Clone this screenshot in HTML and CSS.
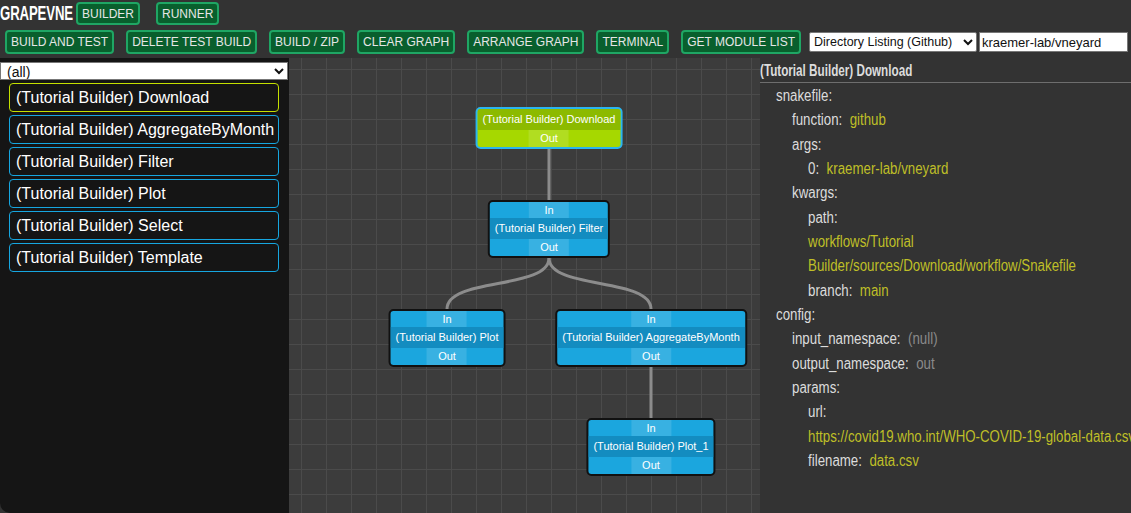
FILE: index.html
```html
<!DOCTYPE html>
<html>
<head>
<meta charset="utf-8">
<link rel="stylesheet" href="styles.css">
</head>
<body>
<div class="app">
  <header class="header">
    <div class="row row1">
      <span class="logo"><span class="logo-text">GRAPEVNE</span></span>
      <button class="btn btn-builder">BUILDER</button>
      <button class="btn btn-runner">RUNNER</button>
    </div>
    <div class="row row2">
      <button class="btn">BUILD AND TEST</button>
      <button class="btn">DELETE TEST BUILD</button>
      <button class="btn">BUILD / ZIP</button>
      <button class="btn">CLEAR GRAPH</button>
      <button class="btn">ARRANGE GRAPH</button>
      <button class="btn">TERMINAL</button>
      <button class="btn">GET MODULE LIST</button>
      <select class="repo-select"><option>Directory Listing (Github)</option></select>
      <input class="repo-input" type="text" value="kraemer-lab/vneyard">
    </div>
  </header>
  <main class="main">
    <aside class="left">
      <select class="filter-select"><option>(all)</option></select>
      <ul class="modules">
        <li class="module selected">(Tutorial Builder) Download</li>
        <li class="module">(Tutorial Builder) AggregateByMonth</li>
        <li class="module">(Tutorial Builder) Filter</li>
        <li class="module">(Tutorial Builder) Plot</li>
        <li class="module">(Tutorial Builder) Select</li>
        <li class="module">(Tutorial Builder) Template</li>
      </ul>
    </aside>
    <section class="canvas">
      <svg class="edges" width="471" height="455" viewBox="0 0 471 455">
        <path d="M260 91 L260 142" />
        <path d="M260 200 C260 232, 158 219, 158 251" />
        <path d="M260 200 C260 232, 362 219, 362 251" />
        <path d="M362 309 L362 360" />
      </svg>
      <div class="node node-source" style="left:260px; top:49px;">
        <div class="node-title">(Tutorial Builder) Download</div>
        <div class="port"><span>Out</span></div>
      </div>
      <div class="node" style="left:260px; top:142px;">
        <div class="port"><span>In</span></div>
        <div class="node-title">(Tutorial Builder) Filter</div>
        <div class="port"><span>Out</span></div>
      </div>
      <div class="node" style="left:158px; top:251px;">
        <div class="port"><span>In</span></div>
        <div class="node-title">(Tutorial Builder) Plot</div>
        <div class="port"><span>Out</span></div>
      </div>
      <div class="node" style="left:362px; top:251px;">
        <div class="port"><span>In</span></div>
        <div class="node-title">(Tutorial Builder) AggregateByMonth</div>
        <div class="port"><span>Out</span></div>
      </div>
      <div class="node" style="left:362px; top:360px;">
        <div class="port"><span>In</span></div>
        <div class="node-title">(Tutorial Builder) Plot_1</div>
        <div class="port"><span>Out</span></div>
      </div>
    </section>
    <aside class="right">
      <div class="panel-title"><span class="title-text">(Tutorial Builder) Download</span></div>
      <div class="tree">
        <div class="line l1"><span class="key">snakefile:</span></div>
        <div class="line l2"><span class="key">function:</span><span class="val">github</span></div>
        <div class="line l2"><span class="key">args:</span></div>
        <div class="line l3"><span class="key">0:</span><span class="val">kraemer-lab/vneyard</span></div>
        <div class="line l2"><span class="key">kwargs:</span></div>
        <div class="line l3"><span class="key">path:</span></div>
        <div class="line l3"><span class="val">workflows/Tutorial</span></div>
        <div class="line l3"><span class="val">Builder/sources/Download/workflow/Snakefile</span></div>
        <div class="line l3"><span class="key">branch:</span><span class="val">main</span></div>
        <div class="line l1"><span class="key">config:</span></div>
        <div class="line l2"><span class="key">input_namespace:</span><span class="val null">(null)</span></div>
        <div class="line l2"><span class="key">output_namespace:</span><span class="val null">out</span></div>
        <div class="line l2"><span class="key">params:</span></div>
        <div class="line l3"><span class="key">url:</span></div>
        <div class="line l3"><span class="val">https://covid19.who.int/WHO-COVID-19-global-data.csv</span></div>
        <div class="line l3"><span class="key">filename:</span><span class="val">data.csv</span></div>
      </div>
    </aside>
  </main>
</div>
</body>
</html>
```
FILE: styles.css
```css
* { box-sizing: border-box; }
html, body {
  margin: 0;
  padding: 0;
  background: #333333;
  width: 1131px;
  height: 513px;
  overflow: hidden;
  font-family: "Liberation Sans", Arial, sans-serif;
}
.app {
  display: flex;
  flex-direction: column;
  height: 513px;
}
.header {
  display: flex;
  flex-direction: column;
  height: 58px;
}
.row {
  display: flex;
}
.row1 {
  height: 27px;
  padding-top: 2px;
  align-items: flex-start;
}
.row2 {
  height: 31px;
  padding-left: 5px;
  padding-top: 3px;
  align-items: flex-start;
}
.logo {
  display: block;
  width: 76px;
  height: 23px;
  overflow: hidden;
  flex-shrink: 0;
}
.logo-text {
  display: inline-block;
  font-weight: bold;
  font-size: 20px;
  line-height: 23px;
  color: #ffffff;
  letter-spacing: -0.2px;
  transform: scaleX(0.66);
  transform-origin: left center;
  white-space: nowrap;
}
.btn {
  height: 24px;
  margin: 0 12px 0 0;
  padding: 0 4px;
  background: #095f2d;
  border: 2px solid #1fa664;
  border-radius: 4px;
  color: #e6e6e6;
  font-family: "Liberation Sans", Arial, sans-serif;
  font-size: 12px;
  line-height: 18px;
  white-space: nowrap;
}
.row1 .btn { height: 23px; }
.btn-builder { margin-right: 16px; }
.row2 .btn:last-of-type { margin-right: 8px; }
.repo-select {
  height: 20px;
  margin-top: 2px;
  width: 168px;
  font-family: "Liberation Sans", Arial, sans-serif;
  font-size: 12.5px;
  background: #ffffff;
  color: #111;
  border: 1px solid #777;
  border-radius: 2px;
  padding: 0;
}
.repo-input {
  height: 20px;
  margin-top: 2px;
  margin-left: 2px;
  width: 149px;
  font-family: "Liberation Sans", Arial, sans-serif;
  font-size: 13px;
  color: #111;
  background: #fff;
  border: 1px solid #777;
  padding: 0 2px;
}
.main {
  display: flex;
  flex: 1;
  min-height: 0;
}
.left {
  width: 289px;
  background: #151515;
  display: flex;
  flex-direction: column;
  padding-top: 4px;
  border-bottom-left-radius: 10px;
}
.filter-select {
  width: 288px;
  height: 18px;
  font-family: "Liberation Sans", Arial, sans-serif;
  font-size: 14px;
  background: #fff;
  color: #111;
  border: 1px solid #777;
  padding: 0 2px;
}
.modules {
  list-style: none;
  margin: 3px 0 0 9px;
  padding: 0;
  display: flex;
  flex-direction: column;
  gap: 3px;
  width: 270px;
}
.module {
  height: 29px;
  border: 1px solid #16a6e0;
  border-radius: 4px;
  color: #ffffff;
  font-size: 16px;
  line-height: 27px;
  padding-left: 6px;
  white-space: nowrap;
  overflow: hidden;
}
.module.selected { border-color: #c4e000; }
.canvas {
  position: relative;
  width: 471px;
  background-color: #3c3c3c;
  background-image:
    linear-gradient(to right, #4b4b4b 1px, transparent 1px),
    linear-gradient(to bottom, #4b4b4b 1px, transparent 1px);
  background-size: 25px 25px;
  background-position: 12px 11px;
  overflow: hidden;
}
.edges {
  position: absolute;
  left: 0;
  top: 0;
}
.edges path {
  fill: none;
  stroke: #8c8c8c;
  stroke-width: 3;
}
.node {
  position: absolute;
  transform: translateX(-50%);
  border: 2px solid #111111;
  border-radius: 5px;
  overflow: hidden;
  background: #1ba6de;
  color: #ffffff;
  font-size: 11px;
  white-space: nowrap;
}
.node-title {
  height: 21px;
  line-height: 21px;
  padding: 0 5px;
  background: #138cc0;
  text-align: center;
}
.port {
  height: 16px;
  line-height: 16px;
  text-align: center;
}
.port:last-child { height: 17px; line-height: 17px; }
.port span {
  display: inline-block;
  width: 40px;
  background: rgba(255, 255, 255, 0.13);
}
.node-source {
  border-color: #2ab4f0;
  background: #a6d800;
}
.node-source .node-title {
  background: #8cba00;
}
.right {
  width: 371px;
  background: #333333;
  color: #dcdcdc;
  overflow: hidden;
}
.panel-title {
  height: 25px;
  padding-top: 2px;
  line-height: 22px;
  border-bottom: 1px solid #6e6e6e;
  white-space: nowrap;
}
.title-text {
  display: inline-block;
  font-weight: bold;
  font-size: 16px;
  transform: scaleX(0.73);
  transform-origin: left center;
}
.tree {
  width: 447px;
  padding-top: 1px;
  transform: scaleX(0.83);
  transform-origin: left top;
}
.line {
  height: 24.33px;
  line-height: 24.33px;
  font-size: 16px;
  white-space: nowrap;
}
.l1 { padding-left: 19.3px; }
.l2 { padding-left: 38.6px; }
.l3 { padding-left: 57.9px; }
.key {
  color: #dcdcdc;
  margin-right: 9px;
}
.val { color: #bfbf27; }
.val.null { color: #8a8a8a; }
```
